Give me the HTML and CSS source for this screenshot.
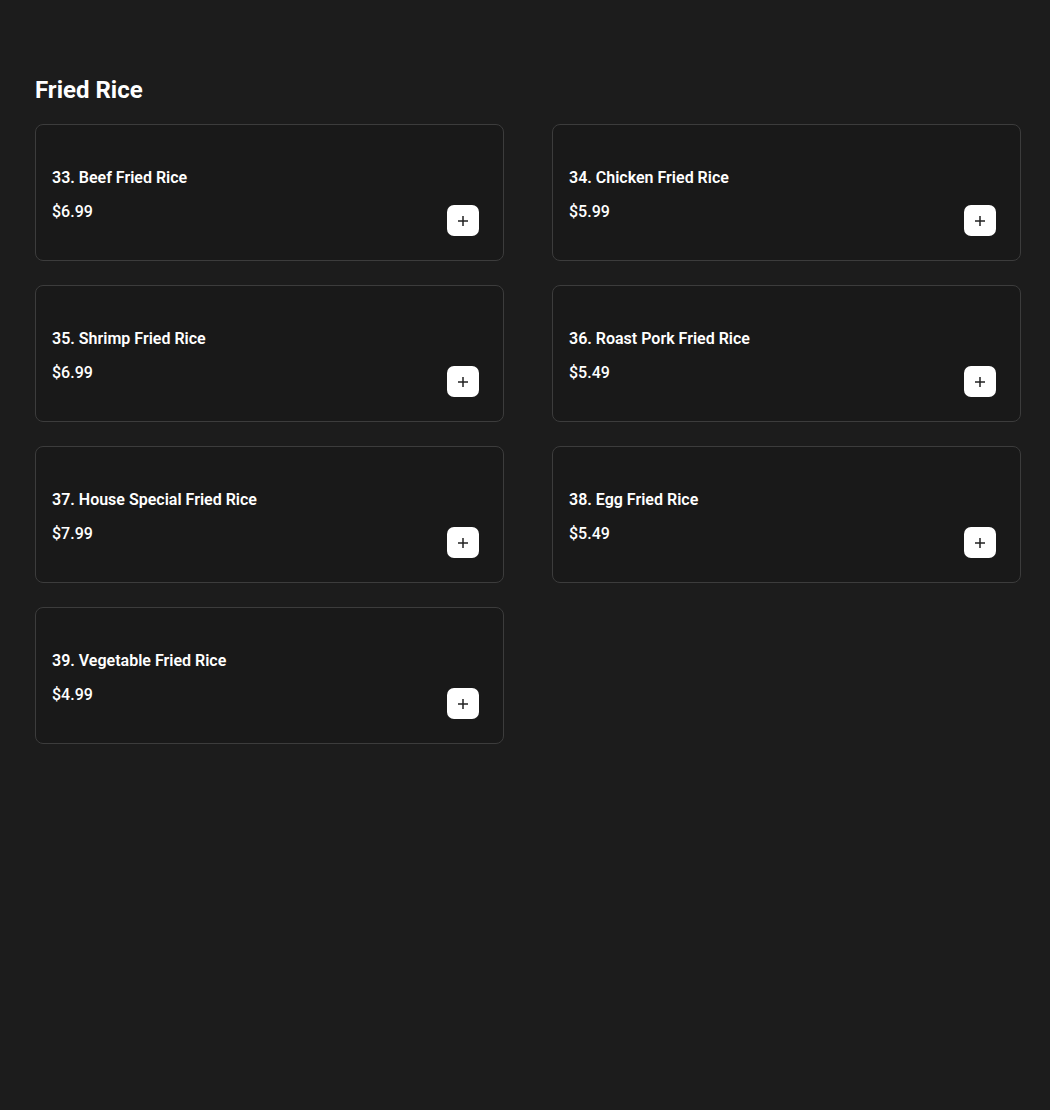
FILE: index.html
```html
<!DOCTYPE html>
<html lang="en">
<head>
<meta charset="utf-8">
<link rel="stylesheet" href="styles.css">
<title>Fried Rice</title>
</head>
<body>
<main class="page">
  <h2 class="section-title">Fried Rice</h2>
  <div class="grid">
    <div class="card"><div class="info"><div class="name">33. Beef Fried Rice</div><div class="price">$6.99</div></div><button class="add"><svg viewBox="0 0 12 12" width="12" height="12"><path d="M6 1v10M1 6h10" stroke="#222" stroke-width="1.5" fill="none"/></svg></button></div>
    <div class="card"><div class="info"><div class="name">34. Chicken Fried Rice</div><div class="price">$5.99</div></div><button class="add"><svg viewBox="0 0 12 12" width="12" height="12"><path d="M6 1v10M1 6h10" stroke="#222" stroke-width="1.5" fill="none"/></svg></button></div>
    <div class="card"><div class="info"><div class="name">35. Shrimp Fried Rice</div><div class="price">$6.99</div></div><button class="add"><svg viewBox="0 0 12 12" width="12" height="12"><path d="M6 1v10M1 6h10" stroke="#222" stroke-width="1.5" fill="none"/></svg></button></div>
    <div class="card"><div class="info"><div class="name">36. Roast Pork Fried Rice</div><div class="price">$5.49</div></div><button class="add"><svg viewBox="0 0 12 12" width="12" height="12"><path d="M6 1v10M1 6h10" stroke="#222" stroke-width="1.5" fill="none"/></svg></button></div>
    <div class="card"><div class="info"><div class="name">37. House Special Fried Rice</div><div class="price">$7.99</div></div><button class="add"><svg viewBox="0 0 12 12" width="12" height="12"><path d="M6 1v10M1 6h10" stroke="#222" stroke-width="1.5" fill="none"/></svg></button></div>
    <div class="card"><div class="info"><div class="name">38. Egg Fried Rice</div><div class="price">$5.49</div></div><button class="add"><svg viewBox="0 0 12 12" width="12" height="12"><path d="M6 1v10M1 6h10" stroke="#222" stroke-width="1.5" fill="none"/></svg></button></div>
    <div class="card"><div class="info"><div class="name">39. Vegetable Fried Rice</div><div class="price">$4.99</div></div><button class="add"><svg viewBox="0 0 12 12" width="12" height="12"><path d="M6 1v10M1 6h10" stroke="#222" stroke-width="1.5" fill="none"/></svg></button></div>
  </div>
</main>
</body>
</html>
```
FILE: styles.css
```css
* { box-sizing: border-box; }
html, body { margin: 0; padding: 0; }
body {
  background: #1c1c1c;
  color: #fff;
  font-family: Roboto, "Liberation Sans", Arial, sans-serif;
}
.page {
  padding: 74px 29px 40px 35px;
}
.section-title {
  margin: 0 0 18px;
  font-size: 24px;
  line-height: 32px;
  font-weight: 700;
}
.grid {
  display: grid;
  grid-template-columns: 1fr 1fr;
  column-gap: 48px;
  row-gap: 24px;
}
.card {
  display: flex;
  justify-content: space-between;
  align-items: flex-end;
  height: 137px;
  padding: 41px 24px 24px 16px;
  background: #191919;
  border: 1px solid #3c3c3c;
  border-radius: 8px;
}
.info {
  align-self: flex-start;
  display: flex;
  flex-direction: column;
  gap: 10px;
}
.name {
  font-size: 16px;
  line-height: 24px;
  font-weight: 600;
}
.price {
  font-size: 16px;
  line-height: 24px;
  font-weight: 500;
}
.add {
  width: 32px;
  height: 31px;
  padding: 0;
  border: none;
  border-radius: 7px;
  background: #fff;
  display: flex;
  align-items: center;
  justify-content: center;
  cursor: pointer;
}
```
